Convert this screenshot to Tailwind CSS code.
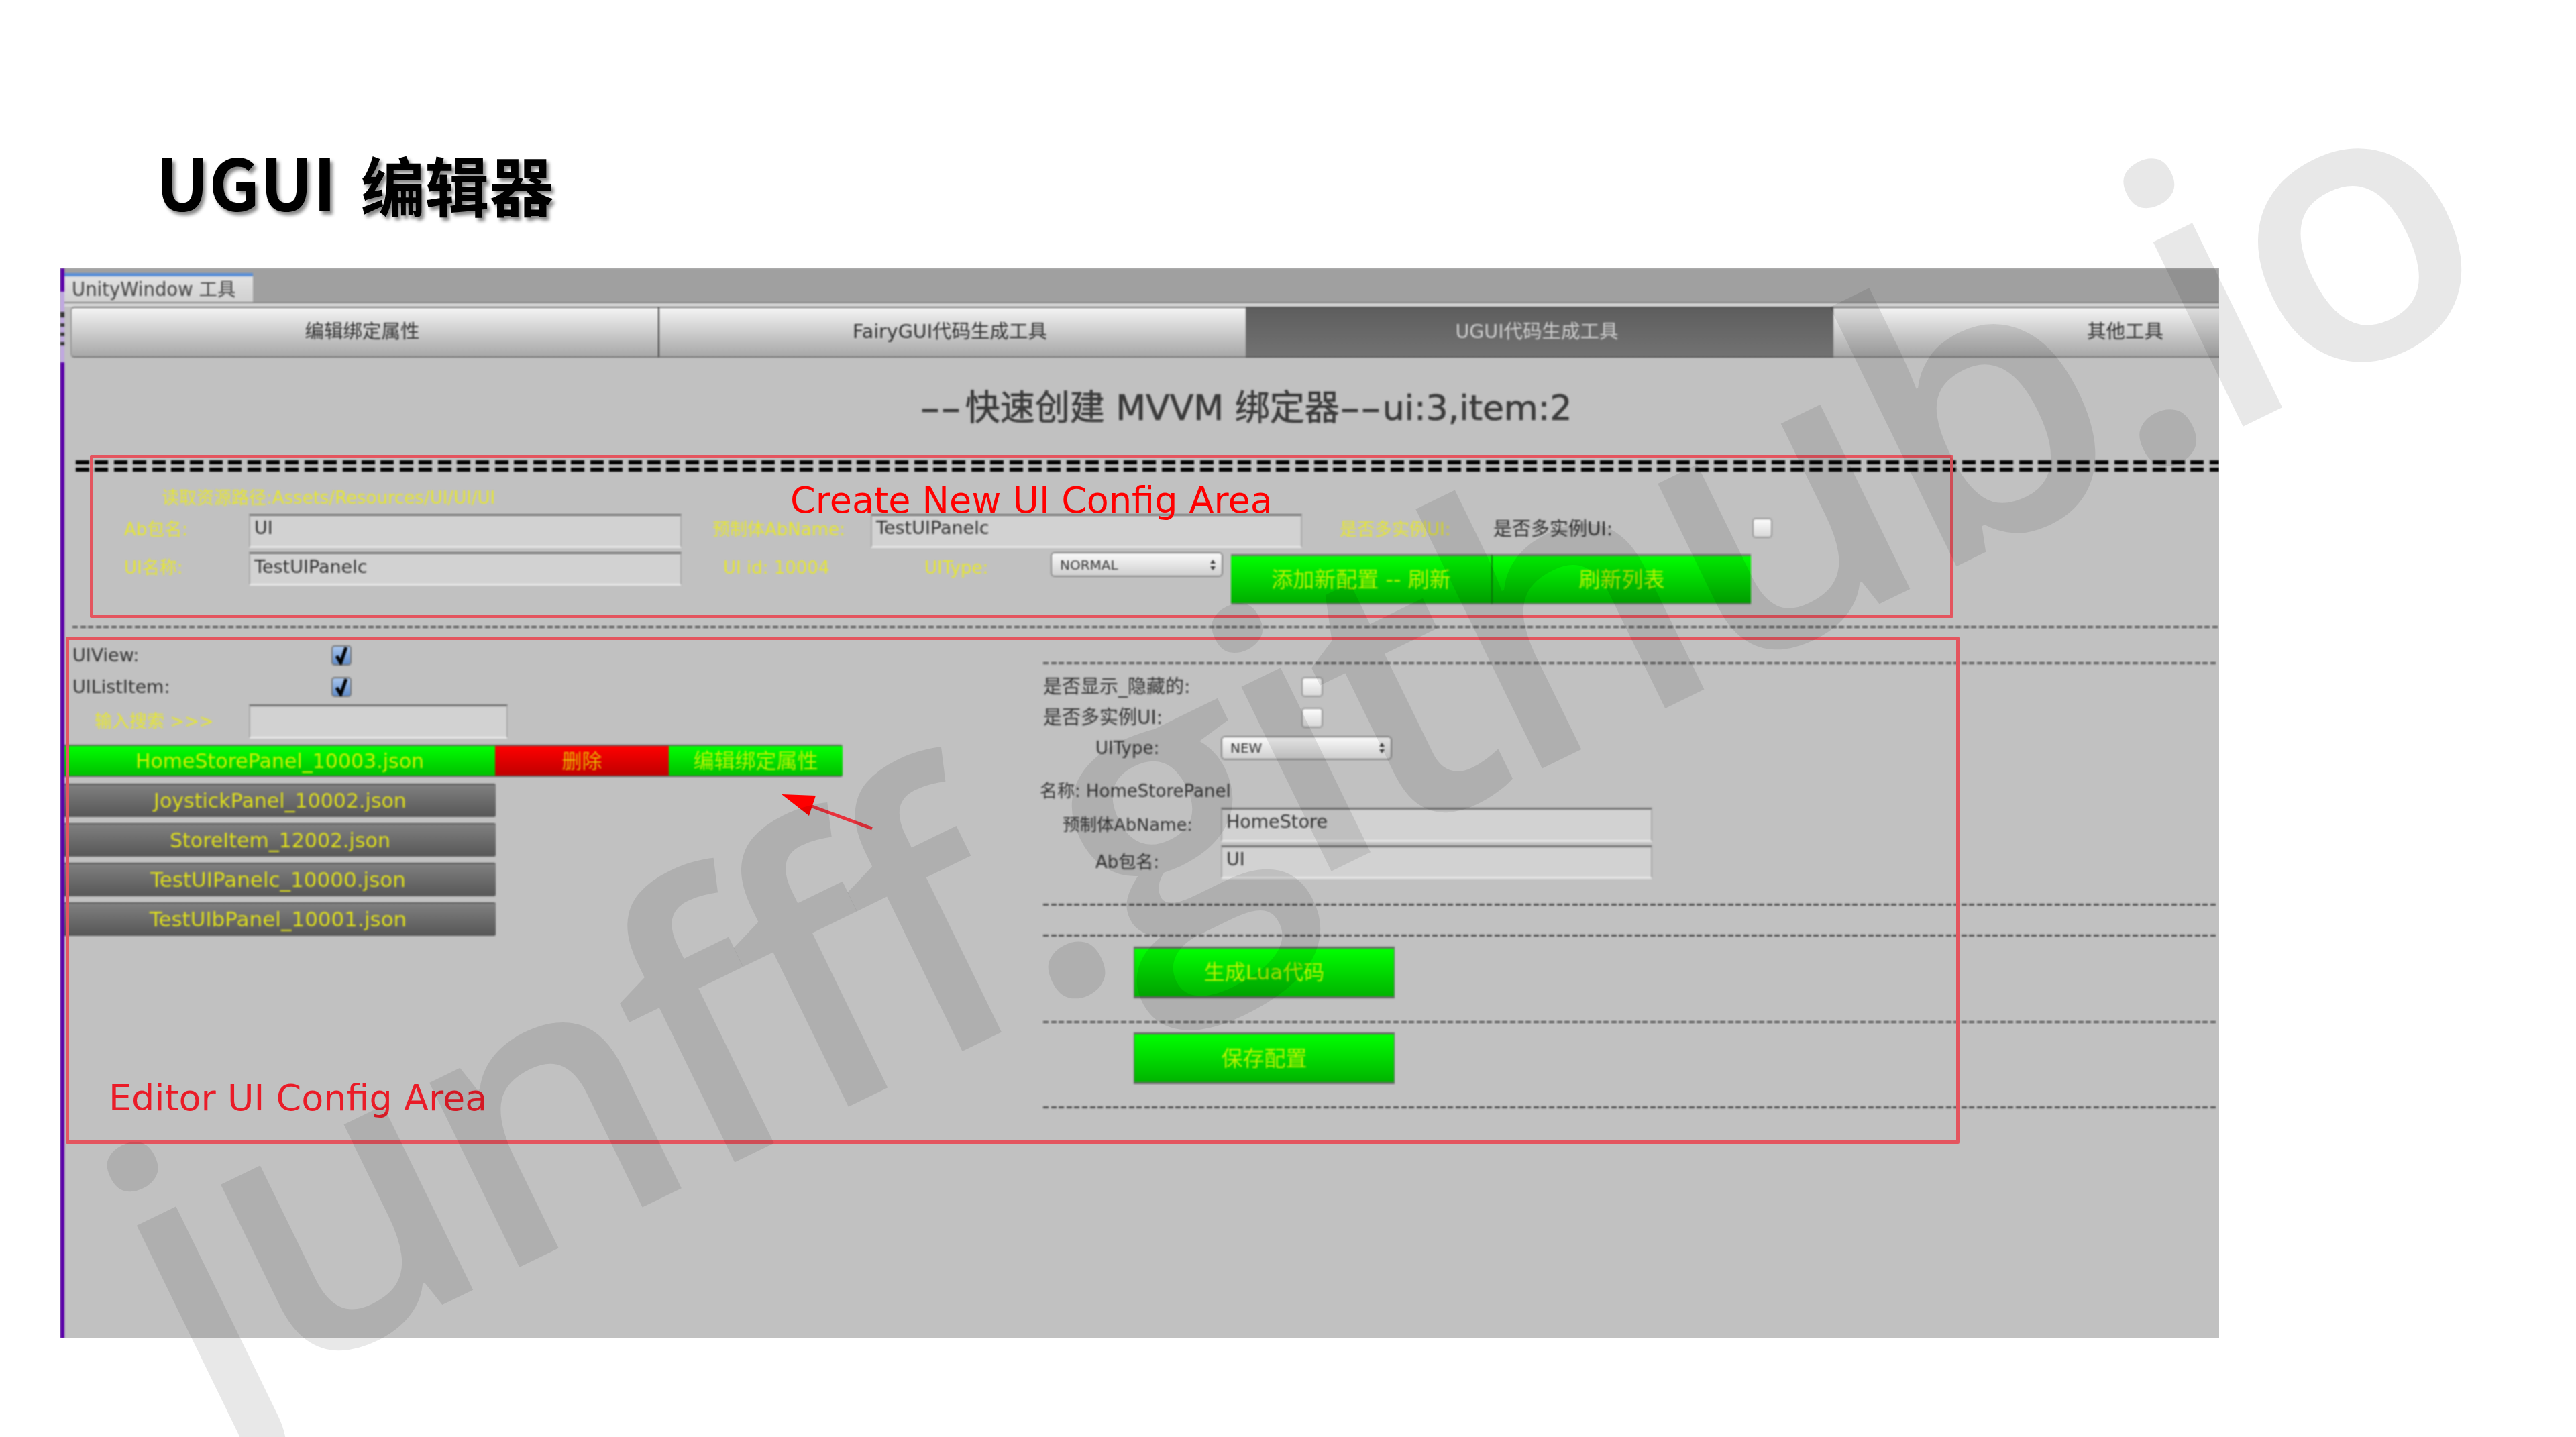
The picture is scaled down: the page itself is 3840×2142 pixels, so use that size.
<!DOCTYPE html>
<html lang="en">
<head>
  <meta charset="UTF-8" />
  <title>UGUI 编辑器</title>
  <script src="https://cdn.jsdelivr.net/npm/@tailwindcss/browser@4"></script>
</head>
<body class="bg-white">
<div class="relative w-[3840px] h-[2142px] overflow-hidden bg-white [font-family:'DejaVu_Sans','Noto_Sans_CJK_SC',sans-serif]">

  <!-- Slide title -->
  <h1 class="h-[400px] pl-[232px] pt-[209px] text-[106px] leading-[120px] font-bold text-black [font-family:'Noto_Sans_CJK_SC',sans-serif] [text-shadow:4px_5px_5px_#888]">UGUI <span class="ml-[12px] text-[96px]">编辑器</span></h1>

  <!-- Editor window screenshot -->
  <div class="ml-[90px] w-[3218px] h-[1595px] overflow-hidden bg-[#c1c1c1]">
    <div class="relative h-full border-l-[6px] border-[#5a00a8] blur-[0.9px] text-[#333] text-[27px]">

      <!-- Faded part of the window's left edge -->
      <div class="absolute -left-[6px] top-[35px] w-[6px] h-[105px] bg-[#c0a8e0] flex flex-col gap-[9px] pt-[30px]">
        <div class="h-[8px] bg-[#333]"></div>
        <div class="h-[5px] bg-[#333]"></div>
        <div class="h-[5px] bg-[#333]"></div>
        <div class="h-[5px] bg-[#333]"></div>
      </div>

      <!-- Window tab strip -->
      <div class="h-[50px] bg-[#a0a0a0] pt-[7px]">
        <div class="w-[281px] h-[43px] border-t-[5px] border-[#5b8fd6] bg-gradient-to-b from-[#e2e2e2] to-[#d0d0d0] pl-[11px] text-[27.5px] leading-[38px] text-[#444]">UnityWindow 工具</div>
      </div>
      <div class="h-[7px] border-t-2 border-[#888] bg-[#d8d8d8]"></div>

      <!-- Tool tabs -->
      <div class="ml-[9px] flex w-[3504px] h-[76px] text-[28.5px]">
        <div class="w-[876px] flex items-center justify-center pr-[8px] rounded-l-md border-l-2 border-y-2 border-y-[#777] border-l-[#999] bg-gradient-to-b from-[#f4f4f4] to-[#a8a8a8] text-[#333]">编辑绑定属性</div>
        <div class="w-[876px] flex items-center justify-center pr-[8px] border-l-2 border-y-2 border-y-[#777] border-l-[#444] bg-gradient-to-b from-[#f4f4f4] to-[#a8a8a8] text-[#333]">FairyGUI代码生成工具</div>
        <div class="w-[876px] flex items-center justify-center pr-[8px] border-y-2 border-y-[#555] bg-gradient-to-b from-[#5e5e5e] to-[#727272] text-[#cfcfcf]">UGUI代码生成工具</div>
        <div class="w-[876px] flex items-center justify-center pr-[6px] border-y-2 border-y-[#777] bg-gradient-to-b from-[#f4f4f4] to-[#a8a8a8] text-[#333]">其他工具</div>
      </div>

      <!-- Heading -->
      <div class="ml-[9px] w-[3504px] h-[153px] pt-[48px] text-center text-[52px] leading-[54px] text-[#3a3a3a] [-webkit-text-stroke:0.7px_#3a3a3a]"><span class="inline-block w-[68px] origin-left scale-x-[1.65] text-left">--</span>快速创建 MVVM 绑定器<span class="inline-block w-[64px] origin-left scale-x-[1.65] text-left">--</span>ui:3,item:2</div>

      <!-- Heavy double separator -->
      <div class="ml-[17px] flex flex-col gap-[5px]">
        <div class="h-[6px] bg-[repeating-linear-gradient(90deg,#000_0_20px,transparent_20px_28.4px)]"></div>
        <div class="h-[6px] bg-[repeating-linear-gradient(90deg,#000_0_20px,transparent_20px_28.4px)]"></div>
      </div>

      <!-- Create form -->
      <div class="ml-[145px] mt-[27px] h-[24px] text-[26px] leading-[24px] text-[#e6e632]">读取资源路径:Assets/Resources/UI/UI/UI</div>

      <div class="mt-[12px] flex h-[57px]">
        <div class="ml-[89px] w-[186px] h-[46px] flex items-center text-[26px] text-[#e6e632]">Ab包名:</div>
        <div class="w-[645px] h-[51px] border-t-[3px] border-x-2 border-b-[3px] border-t-[#777] border-x-[#aaa] border-b-[#e6e6e6] bg-[#d2d2d2] pl-[6px] leading-[36px]">UI</div>
        <div class="ml-[46px] w-[236px] h-[46px] flex items-center text-[26px] text-[#e6e632]">预制体AbName:</div>
        <div class="w-[643px] h-[51px] border-t-[3px] border-x-2 border-b-[3px] border-t-[#777] border-x-[#aaa] border-b-[#e6e6e6] bg-[#d2d2d2] pl-[6px] leading-[36px]">TestUIPanelc</div>
        <div class="ml-[56px] w-[229px] h-[46px] flex items-center text-[26px] text-[#e6e632]">是否多实例UI:</div>
        <div class="w-[386px] h-[46px] flex items-center text-[28px] text-[#2e2e2e]">是否多实例UI:</div>
        <div class="mt-[6px] w-[30px] h-[30px] rounded-[5px] border-2 border-[#999] bg-gradient-to-b from-[#fdfdfd] to-[#d8d8d8]"></div>
      </div>

      <div class="flex h-[78px]">
        <div class="ml-[89px] w-[186px] h-[46px] flex items-center text-[26px] text-[#e6e632]">UI名称:</div>
        <div class="w-[645px] h-[50px] border-t-[3px] border-x-2 border-b-[3px] border-t-[#777] border-x-[#aaa] border-b-[#e6e6e6] bg-[#d2d2d2] pl-[6px] leading-[38px]">TestUIPanelc</div>
        <div class="ml-[62px] w-[300px] h-[46px] flex items-center text-[26px] text-[#e6e632]">UI id: 10004</div>
        <div class="w-[188px] h-[46px] flex items-center text-[26px] text-[#e6e632]">UIType:</div>
        <div class="w-[257px] h-[37px] flex items-center justify-between rounded-[6px] border-2 border-[#8a8a8a] bg-gradient-to-b from-[#fafafa] to-[#cfcfcf] pl-[12px] pr-[8px] text-[20px] text-[#333]">
          NORMAL
          <svg width="10" height="20" viewBox="0 0 10 20"><path d="M5 2 9 8H1zM5 18 1 12h8z" fill="#333"/></svg>
        </div>
        <div class="ml-[12px] mt-[3px] flex h-[75px] text-[32px] text-[#b9f200]">
          <div class="w-[388px] flex items-center justify-center border-t-[3px] border-b-2 border-[#777] bg-gradient-to-b from-[#00ff00] to-[#00ae00]">添加新配置 -- 刷新</div>
          <div class="w-[387px] flex items-center justify-center border-l-2 border-t-[3px] border-b-2 border-[#777] border-l-[#0a7a0a] bg-gradient-to-b from-[#00ff00] to-[#00ae00]">刷新列表</div>
        </div>
      </div>

      <div class="ml-[12px] mt-[32px] h-[3px] bg-[repeating-linear-gradient(90deg,#555_0_8px,transparent_8px_11.6px)]"></div>

      <!-- Edit area: config list + detail column -->
      <div class="flex">
        <div class="w-[1459px] shrink-0">
          <div class="mt-[26px] flex items-center h-[30px]">
            <div class="w-[398px] pl-[12px]">UIView:</div>
            <div class="w-[30px] h-[30px] flex items-center justify-center rounded-[5px] border-2 border-[#777] bg-gradient-to-b from-[#a9c6ee] to-[#5f8ccb]">
              <svg width="22" height="28" viewBox="0 0 22 28"><path d="M4 15 10 25 18 2" fill="none" stroke="#000" stroke-width="5"/></svg>
            </div>
          </div>
          <div class="mt-[17px] flex items-center h-[30px]">
            <div class="w-[398px] pl-[12px]">UIListItem:</div>
            <div class="w-[30px] h-[30px] flex items-center justify-center rounded-[5px] border-2 border-[#777] bg-gradient-to-b from-[#a9c6ee] to-[#5f8ccb]">
              <svg width="22" height="28" viewBox="0 0 22 28"><path d="M4 15 10 25 18 2" fill="none" stroke="#000" stroke-width="5"/></svg>
            </div>
          </div>
          <div class="mt-[11px] flex items-center h-[51px]">
            <div class="ml-[45px] w-[230px] text-[26px] text-[#e6e632]">输入搜索 &gt;&gt;&gt;</div>
            <div class="w-[386px] h-[51px] border-t-[3px] border-x-2 border-b-[3px] border-t-[#777] border-x-[#aaa] border-b-[#e6e6e6] bg-[#d2d2d2]"></div>
          </div>
          <div class="mt-[9px] flex h-[48px] text-[30px]">
            <div class="w-[642px] flex items-center justify-center border-t-2 border-b-2 border-[#666] bg-gradient-to-b from-[#00ff00] to-[#00c000] text-[#cdf000]">HomeStorePanel_10003.json</div>
            <div class="w-[259px] flex items-center justify-center border-t-2 border-b-2 border-[#666] bg-gradient-to-b from-[#ff0000] to-[#c00000] text-[#e8b400]">删除</div>
            <div class="w-[259px] flex items-center justify-center border-t-2 border-b-2 border-[#666] rounded-r-[3px] bg-gradient-to-b from-[#00ff00] to-[#00c000] text-[#b9f200] text-[31px]">编辑绑定属性</div>
          </div>
          <div class="mt-[10px] flex flex-col gap-[9px] text-[30px] text-[#dcdc1e]">
            <div class="w-[643px] h-[50px] flex items-center justify-center rounded-r-[3px] border-t-2 border-b-2 border-[#5c5c5c] bg-gradient-to-b from-[#808080] to-[#585858]">JoystickPanel_10002.json</div>
            <div class="w-[643px] h-[50px] flex items-center justify-center rounded-r-[3px] border-t-2 border-b-2 border-[#5c5c5c] bg-gradient-to-b from-[#808080] to-[#585858]">StoreItem_12002.json</div>
            <div class="w-[643px] h-[50px] flex items-center justify-center pr-[6px] rounded-r-[3px] border-t-2 border-b-2 border-[#5c5c5c] bg-gradient-to-b from-[#808080] to-[#585858] text-[31px]">TestUIPanelc_10000.json</div>
            <div class="w-[643px] h-[50px] flex items-center justify-center pr-[6px] rounded-r-[3px] border-t-2 border-b-2 border-[#5c5c5c] bg-gradient-to-b from-[#808080] to-[#585858] text-[31px]">TestUIbPanel_10001.json</div>
          </div>
        </div>

        <div class="w-[1752px] shrink-0">
          <div class="mt-[51px] h-[3px] bg-[repeating-linear-gradient(90deg,#555_0_8px,transparent_8px_11.6px)]"></div>
          <div class="mt-[19px] flex items-center h-[30px]">
            <div class="w-[385px] text-[28px]">是否显示_隐藏的:</div>
            <div class="w-[32px] h-[30px] rounded-[5px] border-2 border-[#999] bg-gradient-to-b from-[#fdfdfd] to-[#d8d8d8]"></div>
          </div>
          <div class="mt-[16px] flex items-center h-[30px]">
            <div class="w-[385px] text-[28px]">是否多实例UI:</div>
            <div class="w-[32px] h-[30px] rounded-[5px] border-2 border-[#999] bg-gradient-to-b from-[#fdfdfd] to-[#d8d8d8]"></div>
          </div>
          <div class="mt-[12px] flex items-center h-[36px]">
            <div class="ml-[78px] w-[187px] text-[26px]">UIType:</div>
            <div class="w-[255px] h-[36px] flex items-center justify-between rounded-[6px] border-2 border-[#8a8a8a] bg-gradient-to-b from-[#fafafa] to-[#cfcfcf] pl-[12px] pr-[8px] text-[20px]">
              NEW
              <svg width="10" height="20" viewBox="0 0 10 20"><path d="M5 2 9 8H1zM5 18 1 12h8z" fill="#333"/></svg>
            </div>
          </div>
          <div class="mt-[30px] -ml-[5px] h-[32px] text-[26px] leading-[32px]">名称: HomeStorePanel</div>
          <div class="mt-[9px] flex items-center h-[51px]">
            <div class="ml-[29px] w-[236px] text-[25.5px]">预制体AbName:</div>
            <div class="w-[643px] h-[51px] border-t-[3px] border-x-2 border-b-[3px] border-t-[#777] border-x-[#aaa] border-b-[#e6e6e6] bg-[#d2d2d2] pl-[6px] leading-[36px]">HomeStore</div>
          </div>
          <div class="mt-[5px] flex items-center h-[50px]">
            <div class="ml-[78px] w-[187px] text-[26px]">Ab包名:</div>
            <div class="w-[643px] h-[50px] border-t-[3px] border-x-2 border-b-[3px] border-t-[#777] border-x-[#aaa] border-b-[#e6e6e6] bg-[#d2d2d2] pl-[6px] leading-[36px]">UI</div>
          </div>
          <div class="mt-[37px] h-[3px] bg-[repeating-linear-gradient(90deg,#555_0_8px,transparent_8px_11.6px)]"></div>
          <div class="mt-[43px] h-[3px] bg-[repeating-linear-gradient(90deg,#555_0_8px,transparent_8px_11.6px)]"></div>
          <div class="mt-[15px] ml-[135px] w-[389px] h-[77px] flex items-center justify-center border-t-[3px] border-b-[3px] border-x border-[#6a6a6a] bg-gradient-to-b from-[#00ff00] to-[#00b400] text-[31px] text-[#b9f200]">生成Lua代码</div>
          <div class="mt-[34px] h-[3px] bg-[repeating-linear-gradient(90deg,#555_0_8px,transparent_8px_11.6px)]"></div>
          <div class="mt-[14px] ml-[135px] w-[389px] h-[77px] flex items-center justify-center border-t-[3px] border-b-[3px] border-x border-[#6a6a6a] bg-gradient-to-b from-[#00ff00] to-[#00b400] text-[32px] text-[#b9f200]">保存配置</div>
          <div class="mt-[33px] h-[3px] bg-[repeating-linear-gradient(90deg,#555_0_8px,transparent_8px_11.6px)]"></div>
        </div>
      </div>
    </div>
  </div>

  <!-- Annotations drawn over the screenshot -->
  <div class="absolute left-[134px] top-[678px] w-[2778px] h-[243px] rounded-[2px] border-[5px] border-[#e4555f] blur-[0.5px]"></div>
  <div class="absolute left-[98px] top-[949px] w-[2823px] h-[756px] rounded-[2px] border-[5px] border-[#e4555f] blur-[0.5px]"></div>
  <div class="absolute left-[1178px] top-[708px] text-[54px] leading-[76px] text-[#ff0000]">Create New UI Config Area</div>
  <div class="absolute left-[162px] top-[1599px] text-[54px] leading-[76px] text-[#ea1c28]">Editor UI Config Area</div>
  <svg class="absolute left-[1150px] top-[1170px]" width="170" height="80" viewBox="0 0 170 80">
    <path d="M150 65 55 30" stroke="#e8323c" stroke-width="5" fill="none"/>
    <path d="M15 14 66 16 56 46z" fill="#ff0000"/>
  </svg>

  <!-- Watermark -->
  <div class="absolute left-[1915px] top-[1089px] -translate-x-1/2 -translate-y-1/2 -rotate-[26deg] whitespace-nowrap text-[566px] tracking-[-16px] leading-none font-semibold text-black/[0.09] [font-family:'Open_Sans',sans-serif]">junfff.github.io</div>
</div>
</body>
</html>
